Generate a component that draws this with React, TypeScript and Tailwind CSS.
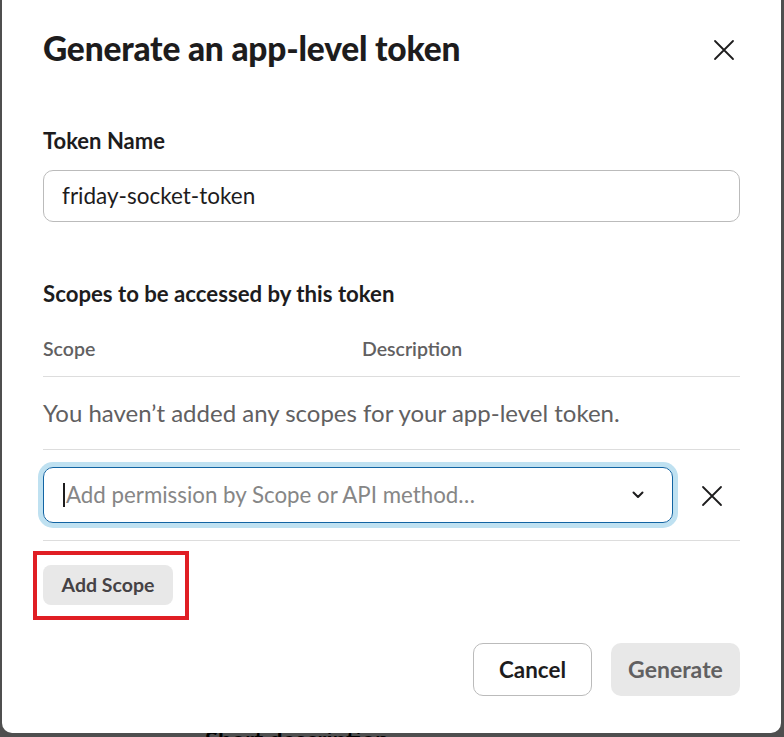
import React from "react";

function XIcon({ size = 22 }: { size?: number }) {
  return (
    <svg width={size} height={size} viewBox="0 0 22 22" fill="none">
      <path d="M2 2L20 20M20 2L2 20" stroke="#1d1c1d" strokeWidth="1.8" strokeLinecap="round" />
    </svg>
  );
}

function Chevron() {
  return (
    <svg width="12" height="8" viewBox="0 0 12 8" fill="none">
      <path d="M1.5 1.5L6 6L10.5 1.5" stroke="#1d1c1d" strokeWidth="2" strokeLinecap="round" strokeLinejoin="round" />
    </svg>
  );
}

export default function App() {
  return (
    <div
      className="relative h-[737px] w-[784px] overflow-hidden bg-[#4f4f4f]"
      style={{ fontFamily: "Lato, 'Noto Sans', sans-serif" }}
    >
      <div className="absolute left-[205px] top-[726px] text-[24px] font-bold leading-[28px] text-black">Short description</div>
      <div className="relative ml-[2px] flex h-[733px] w-[779px] flex-col rounded-b-[10px] bg-white px-[41px] pt-[30px] text-[#1d1c1d]">
        <div className="flex items-center justify-between">
          <h1 className="text-[33.5px] font-black leading-[36px] tracking-[-0.2px]">Generate an app-level token</h1>
          <button className="mr-[5px] mt-[4px]">
            <XIcon />
          </button>
        </div>

        <div className="mt-[63px] text-[22px] font-bold leading-[24px]">Token Name</div>
        <div className="mt-[17px] flex h-[52px] items-center rounded-[10px] border border-[#bbbbbb] px-[18px] text-[22.5px]">
          friday-socket-token
        </div>

        <div className="mt-[60px] text-[22.2px] font-bold leading-[24px]">Scopes to be accessed by this token</div>
        <div className="mt-[31px] grid grid-cols-[319px_1fr] text-[19.5px] font-semibold leading-[24px] text-[#616061]">
          <div>Scope</div>
          <div>Description</div>
        </div>
        <div className="mt-[15px] h-px bg-[#dddddd]" />
        <div className="py-[22px] text-[24px] leading-[28px] text-[#616061]">
          You haven’t added any scopes for your app-level token.
        </div>
        <div className="h-px bg-[#dddddd]" />
        <div className="flex items-center py-[17px]">
          <div className="flex h-[56px] w-[630px] items-center rounded-[10px] border border-[#1264a3] pl-[19px] pr-[28px] shadow-[0_0_0_5px_#bfe1f1]">
            <span className="mr-[1px] h-[24px] w-[2px] bg-[#1d1c1d]" />
            <span className="flex-1 text-[22.3px] text-[#868686]">Add permission by Scope or API method…</span>
            <Chevron />
          </div>
          <button className="ml-[28px] mt-[1px]">
            <XIcon />
          </button>
        </div>
        <div className="h-px bg-[#dddddd]" />

        <div className="relative mt-[24px]">
          <button className="h-[40px] w-[130px] rounded-[8px] bg-[#e8e8e8] text-[19.5px] font-bold text-[#454245]">
            Add Scope
          </button>
          <div className="absolute left-[-10px] top-[-14px] h-[69px] w-[156px] border-[4px] border-[#e01e24]" />
        </div>

        <div className="mt-[38px] flex justify-end gap-[19px]">
          <button className="h-[53px] w-[119px] rounded-[10px] border border-[#bbbbbb] bg-white text-[22.4px] font-bold text-[#1d1c1d]">
            Cancel
          </button>
          <button className="h-[53px] w-[129px] rounded-[10px] bg-[#e8e8e8] text-[23px] font-bold text-[#616061]">
            Generate
          </button>
        </div>
      </div>
    </div>
  );
}
